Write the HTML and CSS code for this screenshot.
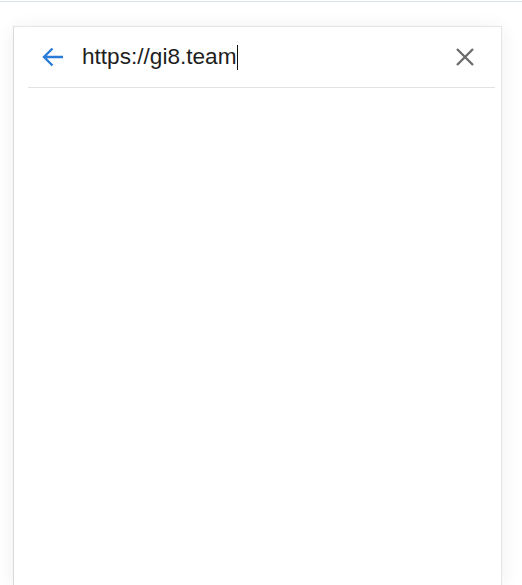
FILE: index.html
```html
<!DOCTYPE html>
<html>
<head>
<title>Open link</title>
<link rel="stylesheet" href="styles.css">
</head>
<body>
<div class="topline"></div>
<div class="card">
  <div class="search">
    <svg class="back" width="22" height="22" viewBox="0 0 22 22">
      <path d="M21 11H2.5M10.5 2.5L2 11l8.5 8.5" fill="none" stroke="#2b7bd9" stroke-width="2.4"/>
    </svg>
    <div class="field">https://gi8.team<span class="caret"></span></div>
    <svg class="close" width="20" height="20" viewBox="0 0 20 20">
      <path d="M2 2L18 18M18 2L2 18" fill="none" stroke="#6b6b6b" stroke-width="2.3"/>
    </svg>
  </div>
  <div class="divider"></div>
</div>
</body>
</html>
```
FILE: styles.css
```css
html, body {
	margin: 0;
	height: 100%;
	background: #ffffff;
	overflow: hidden;
}

.topline {
	height: 1px;
	margin-top: 1px;
	background: #d6e6f2;
}

.card {
	margin: 24px 0 0 13px;
	width: 489px;
	height: calc(100% - 26px);
	box-sizing: border-box;
	background: #ffffff;
	border: 1px solid #e4e4e4;
	border-bottom: none;
	border-left-color: #dadada;
	box-shadow: 0 2px 18px rgba(0, 0, 0, 0.07);
}

.search {
	display: flex;
	align-items: center;
	height: 60px;
	padding: 0 26px 0 28px;
}

.back {
	display: block;
	flex: none;
}

.field {
	margin-left: 18px;
	font-family: "Liberation Sans", Arial, sans-serif;
	font-size: 22.6px;
	color: #1e1e1e;
	display: flex;
	align-items: center;
}

.caret {
	display: inline-block;
	width: 1px;
	height: 25px;
	margin-left: 1px;
	background: #111111;
}

.close {
	display: block;
	flex: none;
	margin-left: auto;
}

.divider {
	height: 1px;
	margin: 0 6px 0 14px;
	background: #e2e2e2;
}
```
